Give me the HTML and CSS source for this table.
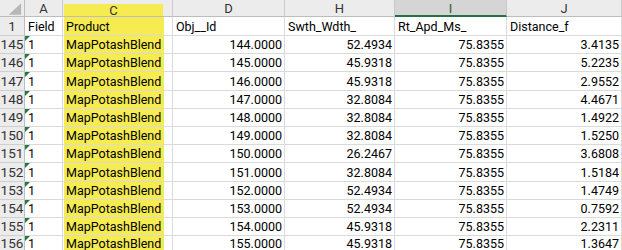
FILE: index.html
```html
<!DOCTYPE html>
<html>
<head>
<meta charset="utf-8">
<link rel="stylesheet" href="styles.css">
</head>
<body>
<div class="sheet">
  <div class="row">
    <div class="hd corner"><svg width="25" height="17" viewBox="0 0 25 17"><polygon points="22,3 22,15 9,15" fill="#b7b7b7"/></svg></div>
    <div class="hd">A</div>
    <div class="hd hd-c"><span>C</span></div>
    <div class="hd">D</div>
    <div class="hd">H</div>
    <div class="hd sel">I</div>
    <div class="hd">J</div>
  </div>
  <div class="row first">
    <div class="rh">1</div>
    <div class="c">Field</div>
    <div class="c y">Product</div>
    <div class="c">Obj__Id</div>
    <div class="c">Swth_Wdth_</div>
    <div class="c">Rt_Apd_Ms_</div>
    <div class="c">Distance_f</div>
  </div>
  <div class="row"><div class="rh">145</div><div class="c f">1</div><div class="c y">MapPotashBlend</div><div class="c n">144.0000</div><div class="c n">52.4934</div><div class="c n">75.8355</div><div class="c n">3.4135</div></div>
  <div class="row"><div class="rh">146</div><div class="c f">1</div><div class="c y">MapPotashBlend</div><div class="c n">145.0000</div><div class="c n">45.9318</div><div class="c n">75.8355</div><div class="c n">5.2235</div></div>
  <div class="row"><div class="rh">147</div><div class="c f">1</div><div class="c y">MapPotashBlend</div><div class="c n">146.0000</div><div class="c n">45.9318</div><div class="c n">75.8355</div><div class="c n">2.9552</div></div>
  <div class="row"><div class="rh">148</div><div class="c f">1</div><div class="c y">MapPotashBlend</div><div class="c n">147.0000</div><div class="c n">32.8084</div><div class="c n">75.8355</div><div class="c n">4.4671</div></div>
  <div class="row"><div class="rh">149</div><div class="c f">1</div><div class="c y">MapPotashBlend</div><div class="c n">148.0000</div><div class="c n">32.8084</div><div class="c n">75.8355</div><div class="c n">1.4922</div></div>
  <div class="row"><div class="rh">150</div><div class="c f">1</div><div class="c y">MapPotashBlend</div><div class="c n">149.0000</div><div class="c n">32.8084</div><div class="c n">75.8355</div><div class="c n">1.5250</div></div>
  <div class="row"><div class="rh">151</div><div class="c f">1</div><div class="c y">MapPotashBlend</div><div class="c n">150.0000</div><div class="c n">26.2467</div><div class="c n">75.8355</div><div class="c n">3.6808</div></div>
  <div class="row"><div class="rh">152</div><div class="c f">1</div><div class="c y">MapPotashBlend</div><div class="c n">151.0000</div><div class="c n">32.8084</div><div class="c n">75.8355</div><div class="c n">1.5184</div></div>
  <div class="row"><div class="rh">153</div><div class="c f">1</div><div class="c y">MapPotashBlend</div><div class="c n">152.0000</div><div class="c n">52.4934</div><div class="c n">75.8355</div><div class="c n">1.4749</div></div>
  <div class="row"><div class="rh">154</div><div class="c f">1</div><div class="c y">MapPotashBlend</div><div class="c n">153.0000</div><div class="c n">52.4934</div><div class="c n">75.8355</div><div class="c n">0.7592</div></div>
  <div class="row"><div class="rh">155</div><div class="c f">1</div><div class="c y">MapPotashBlend</div><div class="c n">154.0000</div><div class="c n">45.9318</div><div class="c n">75.8355</div><div class="c n">2.2311</div></div>
  <div class="row"><div class="rh">156</div><div class="c f">1</div><div class="c y">MapPotashBlend</div><div class="c n">155.0000</div><div class="c n">45.9318</div><div class="c n">75.8355</div><div class="c n">1.3647</div></div>
</div>
</body>
</html>
```
FILE: styles.css
```css
html, body {
  margin: 0;
  padding: 0;
  background: #fff;
  overflow: hidden;
}
.sheet {
  width: 622px;
  height: 250px;
  overflow: hidden;
  display: grid;
  grid-template-columns: 25px 38px 110px 112px 110px 112px 115px;
  grid-template-rows: 17px 19px repeat(11, 18.2px);
  font-family: Roboto, "Liberation Sans", sans-serif;
  font-size: 12.5px;
  color: #000;
}
.row { display: contents; }
.hd {
  box-sizing: border-box;
  background: #ececec;
  border-right: 1px solid #c9c9c9;
  border-bottom: 1px solid #bdbdbd;
  color: #333;
  font-size: 13px;
  display: flex;
  align-items: center;
  justify-content: center;
  line-height: 15px;
  padding-top: 1px;
}
.corner { padding: 0; align-items: stretch; justify-content: stretch; border-right-color: #bdbdbd; }
.corner svg { display: block; }
.hd-c {
  padding: 4px 9px 0 1px;
  align-items: stretch;
  background: #ececec;
}
.hd-c span {
  flex: 1;
  background: #f6ec52;
  display: flex;
  align-items: center;
  justify-content: center;
}
.sel {
  background: #d5d5d5;
  border-bottom: 2px solid #217346;
  color: #1e5e38;
}
.rh {
  box-sizing: border-box;
  background: #ececec;
  border-right: 1px solid #bdbdbd;
  border-bottom: 1px solid #cfcfcf;
  color: #333;
  font-size: 13.5px;
  display: flex;
  align-items: flex-end;
  justify-content: center;
  line-height: 15px;
  padding-bottom: 1px;
}
.c {
  box-sizing: border-box;
  position: relative;
  border-right: 1px solid #dadada;
  border-bottom: 1px solid #dadada;
  display: flex;
  align-items: flex-end;
  padding: 0 2px 1px 3px;
  line-height: 15px;
  white-space: nowrap;
  overflow: hidden;
}
.y {
  padding-left: 3px;
  background: linear-gradient(to right, #fff 0 1px, #f6ec52 1px 101px, #fff 101px);
}
.n { justify-content: flex-end; }
.f::before {
  content: "";
  position: absolute;
  left: 0;
  top: 0;
  border-top: 5px solid #1f7a3c;
  border-right: 5px solid transparent;
}
```
